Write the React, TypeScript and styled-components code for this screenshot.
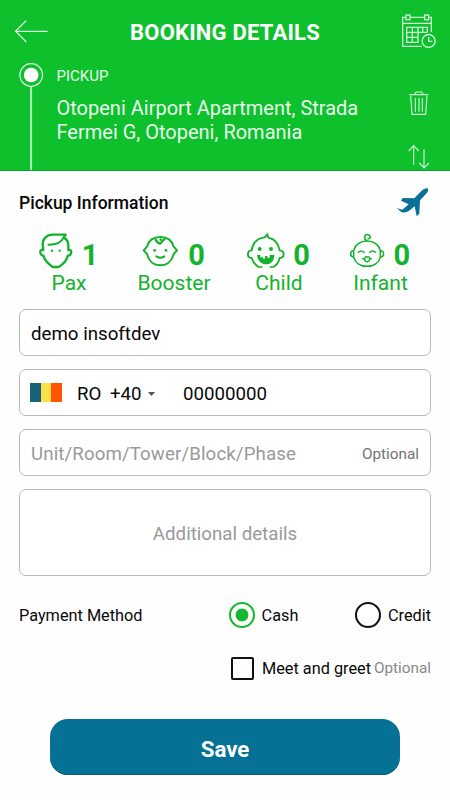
import React from 'react';
import styled, { createGlobalStyle } from 'styled-components';

const Global = createGlobalStyle`
  * { box-sizing: border-box; }
  body { margin: 0; background: #fff; font-family: Roboto, "Liberation Sans", sans-serif; color: #080808; }
  svg { display: block; flex: none; }
`;

const Screen = styled.main`
  width: 450px;
  height: 800px;
  overflow: hidden;
  background: #fefefe;
`;

const Header = styled.header`
  height: 171px;
  background: #0dc02c;
  border-bottom: 1px solid #0ba626;
  color: #fff;
`;

const TitleBar = styled.div`
  display: grid;
  grid-template-columns: 50px 350px 50px;
  align-items: start;
  height: 62px;
`;

const Title = styled.h1`
  margin: 19px 0 0;
  font-size: 22px;
  line-height: 28px;
  font-weight: 700;
  text-align: center;
  letter-spacing: 0.2px;
  white-space: nowrap;
`;

const Route = styled.div`
  display: grid;
  grid-template-columns: 56.5px 343.5px 50px;
  height: 108px;
`;

const Stop = styled.div`
  padding-top: 4px;
  color: #eafbed;
`;

const StopLabel = styled.div`
  font-size: 15px;
  line-height: 20px;
`;

const Address = styled.div`
  margin-top: 10px;
  font-size: 20px;
  line-height: 24px;
  white-space: nowrap;
`;

const Section = styled.div`
  display: flex;
  justify-content: space-between;
  height: 60px;
  padding: 12px 21px 0 19px;
`;

const SectionTitle = styled.h2`
  margin: 8px 0 0;
  font-size: 17.5px;
  line-height: 24px;
  font-weight: 500;
`;

const Counters = styled.div`
  display: grid;
  grid-template-columns: 105px 105px 105px 98px;
  padding-left: 16.5px;
  height: 78px;
  color: #13b32d;
`;

const CounterTop = styled.div<{ $gap: number }>`
  display: flex;
  justify-content: center;
  gap: ${(p) => p.$gap}px;
  height: 40px;
  padding: 1px 2px 0 0;
`;

const Count = styled.span`
  font-size: 29px;
  line-height: 46px;
  font-weight: 700;
`;

const CounterLabel = styled.div`
  font-size: 21px;
  line-height: 24px;
  text-align: center;
`;

const Form = styled.div`
  display: flex;
  flex-direction: column;
  gap: 13px;
  width: 412px;
  margin-left: 19px;
`;

const Field = styled.div<{ $tall?: boolean }>`
  display: flex;
  align-items: center;
  justify-content: ${(p) => (p.$tall ? 'center' : 'flex-start')};
  height: ${(p) => (p.$tall ? 87 : 47)}px;
  padding: 2px 11px 0;
  border: 1px solid #b9b9b9;
  border-radius: 7px;
  background: #fff;
  font-size: 18.7px;
  line-height: 22px;
  white-space: nowrap;
`;

const Placeholder = styled.span<{ $spacing?: number }>`
  color: #999;
  letter-spacing: ${(p) => p.$spacing ?? 0}px;
`;

const Optional = styled.span<{ $light?: boolean }>`
  margin-left: auto;
  font-size: 15.3px;
  color: ${(p) => (p.$light ? '#888' : '#737373')};
`;

const Flag = styled.span`
  width: 32px;
  height: 19px;
  margin: -2px 15px 0 -1px;
  background: linear-gradient(90deg, #17637a 0 33.3%, #fde14b 33.3% 66.6%, #ff5500 66.6%);
`;

const Country = styled.span`
  width: 33px;
`;

const DialCode = styled.span`
  width: 38px;
`;

const Phone = styled.span`
  margin-left: 28px;
`;

const OptionRow = styled.div<{ $top: number }>`
  display: flex;
  align-items: center;
  height: 30px;
  margin: ${(p) => p.$top}px 19px 0;
  font-size: 16.3px;
  white-space: nowrap;
`;

const RowLabel = styled.span`
  width: 210px;
`;

const Option = styled.label<{ $width?: number }>`
  display: flex;
  align-items: center;
  gap: 7px;
  width: ${(p) => (p.$width ? `${p.$width}px` : 'auto')};
`;

const Radio = styled.span<{ $on?: boolean }>`
  width: 26px;
  height: 26px;
  margin-left: 0.6px;
  border: 2.5px solid ${(p) => (p.$on ? '#12b92e' : '#111')};
  border-radius: 50%;
  background: ${(p) => (p.$on ? 'radial-gradient(circle, #12b92e 6px, #fff 6.8px)' : '#fff')};
`;

const Checkbox = styled.span`
  width: 23px;
  height: 23px;
  margin: 0 1px 0 2px;
  border: 2px solid #111;
  border-radius: 2px;
`;

const SaveButton = styled.button`
  display: block;
  width: 350px;
  height: 56px;
  margin: 36px 0 0 50px;
  padding: 3px 0 0;
  border: 0;
  border-radius: 18px;
  background: #047195;
  box-shadow: inset 0 -1px #075c7a;
  color: #fff;
  font: 700 22.3px/28px Roboto, sans-serif;
`;

const BackArrow = () => (
  <svg width="50" height="50" viewBox="0 0 50 50" fill="none" stroke="#dcf8e0" strokeWidth="1.2">
    <path d="M47.5 31.3H16M26.3 20.5 15.5 31.3 26.3 42" />
  </svg>
);

const CalendarIcon = () => (
  <svg width="50" height="62" viewBox="45 0 150 186" fill="none" stroke="#d0f5d5" strokeWidth="4">
    <path d="M62 52H53V139H110M133 52H139V96M53 70H139M76 52H118" />
    <rect x="63" y="45" width="12" height="14" />
    <rect x="119" y="45" width="12" height="14" />
    <path d="M65 82H127V97M65 82V127H99V82M82 82V127M65 97H127M65 112H99M113 82V97" />
    <circle cx="131" cy="123" r="19.5" />
    <path d="M131 111V124H142" />
  </svg>
);

const StopLine = () => (
  <svg width="56" height="108" viewBox="0 0 56 108">
    <circle cx="31.2" cy="13" r="11.3" fill="none" stroke="#e1f9e5" strokeWidth="1.2" />
    <circle cx="31.2" cy="13" r="7.3" fill="#fff" />
    <path d="M31.1 24.5V108" stroke="#b3efbc" strokeWidth="2" />
  </svg>
);

const StopActions = () => (
  <svg width="50" height="108" viewBox="45 -54 150 324" fill="none" stroke="#cff5d5" strokeWidth="3.4">
    <path d="M73 44H130M90 43 93 36H110L114 43M77 47 81 103H122L126 47M91 54V95M102 54V95M112 54V95" />
    <path d="M86 254V197M71 213 86 197 101 213M117 208V263M103 249 117 264 132 249" />
  </svg>
);

const Plane = () => (
  <svg width="34" height="35" viewBox="30 309 102 105" fill="#087094">
    <path d="M35 384 42 386 52 389 71 373 48 362 53 354 88 355 109 333C117 326 126 323 129 326C131 331 127 338 120 345L105 361 103 401 95 409 89 379 78 388C67 398 54 400 48 395Z" />
  </svg>
);

const PaxFace = () => (
  <svg width="36" height="38" viewBox="24 21 108 114" fill="none" stroke="currentColor" strokeWidth="7" strokeLinejoin="round">
    <path d="M40 75C28 70 27 90 41 93C44 110 60 119 68 126H86C99 118 110 106 113 93C128 90 126 71 115 75V61C115 48 109 42 101 38L107 29H70C50 29 38 41 38 58Z" />
    <path d="M101 38C93 55 76 60 53 59" strokeWidth="6" />
    <g fill="currentColor" stroke="none"><circle cx="66" cy="77" r="3.5" /><circle cx="89" cy="77" r="3.5" /></g>
  </svg>
);

const BoosterFace = () => (
  <svg width="38" height="38" viewBox="33 21 114 114" fill="none" stroke="currentColor" strokeWidth="6" strokeLinejoin="round">
    <path d="M51 65C56 46 72 36 91 36S126 46 131 65L141 76 131 87C126 108 111 121 91 121S56 108 51 87L41 76Z" />
    <path d="M76 42C79 50 84 54 90 56L106 40M90 41 96 48" strokeWidth="6.5" />
    <path d="M79 94Q91 102 103 94" strokeLinecap="round" />
    <g fill="currentColor" stroke="none"><circle cx="74" cy="76" r="4.2" /><circle cx="108" cy="76" r="4.2" /></g>
  </svg>
);

const ChildFace = () => (
  <svg width="40" height="38" viewBox="33 21 120 114" fill="none" stroke="currentColor" strokeWidth="5.5">
    <path d="M71 126C60 119 53 109 50 99C35 98 35 77 50 76C53 52 68 40 89 37L97 28 100 38C119 42 130 55 134 76C150 77 150 98 134 99C131 112 125 121 115 126" />
    <path d="M69 126H82M104 126H117" strokeWidth="4" />
    <path fill="currentColor" stroke="none" d="M66 90H76V97H84V101H90V93H97V98H104V90H118C118 107 108 118 94 118S68 108 66 90Z" />
    <g fill="currentColor" stroke="none"><circle cx="74" cy="72" r="6" /><circle cx="108" cy="72" r="6" /></g>
  </svg>
);

const InfantFace = () => (
  <svg width="36" height="38" viewBox="42 21 108 114" fill="none" stroke="currentColor" strokeWidth="4.5" strokeLinecap="round">
    <path d="M56 77C60 59 76 48 96 48S132 59 136 77C149 76 149 96 136 96C132 113 117 124 96 124S60 113 56 96C44 96 44 77 56 77ZM56 77V96M136 77V96" />
    <path d="M96 47C84 42 88 27 99 29C108 31 108 43 99 41" />
    <path d="M70 82Q78 74 87 82M104 82Q113 74 121 82M83 101H87M105 101H109" />
    <path d="M89 101C89 94 94 95 96 97C98 95 104 94 104 101S98 110 96 110S89 108 89 101Z" />
  </svg>
);

const counters = [
  { label: 'Pax', count: 1, gap: 8, Icon: PaxFace },
  { label: 'Booster', count: 0, gap: 9, Icon: BoosterFace },
  { label: 'Child', count: 0, gap: 7, Icon: ChildFace },
  { label: 'Infant', count: 0, gap: 8.5, Icon: InfantFace },
];

export default function App() {
  return (
    <Screen>
      <Global />
      <Header>
        <TitleBar>
          <BackArrow />
          <Title>BOOKING DETAILS</Title>
          <CalendarIcon />
        </TitleBar>
        <Route>
          <StopLine />
          <Stop>
            <StopLabel>PICKUP</StopLabel>
            <Address>Otopeni Airport Apartment, Strada<br />Fermei G, Otopeni, Romania</Address>
          </Stop>
          <StopActions />
        </Route>
      </Header>
      <Section>
        <SectionTitle>Pickup Information</SectionTitle>
        <Plane />
      </Section>
      <Counters>
        {counters.map(({ label, count, gap, Icon }) => (
          <div key={label}>
            <CounterTop $gap={gap}>
              <Icon />
              <Count>{count}</Count>
            </CounterTop>
            <CounterLabel>{label}</CounterLabel>
          </div>
        ))}
      </Counters>
      <Form>
        <Field>demo insoftdev</Field>
        <Field>
          <Flag />
          <Country>RO</Country>
          <DialCode>+40</DialCode>
          <svg width="7" height="4" viewBox="0 0 7 4"><path d="M0 0H7L3.5 4Z" fill="#555" /></svg>
          <Phone>00000000</Phone>
        </Field>
        <Field>
          <Placeholder $spacing={0.1}>Unit/Room/Tower/Block/Phase</Placeholder>
          <Optional>Optional</Optional>
        </Field>
        <Field $tall><Placeholder>Additional details</Placeholder></Field>
      </Form>
      <OptionRow $top={24}>
        <RowLabel>Payment Method</RowLabel>
        <Option $width={127}><Radio $on />Cash</Option>
        <Option><Radio />Credit</Option>
      </OptionRow>
      <OptionRow $top={23}>
        <RowLabel />
        <Option><Checkbox />Meet and greet</Option>
        <Optional $light>Optional</Optional>
      </OptionRow>
      <SaveButton>Save</SaveButton>
    </Screen>
  );
}
